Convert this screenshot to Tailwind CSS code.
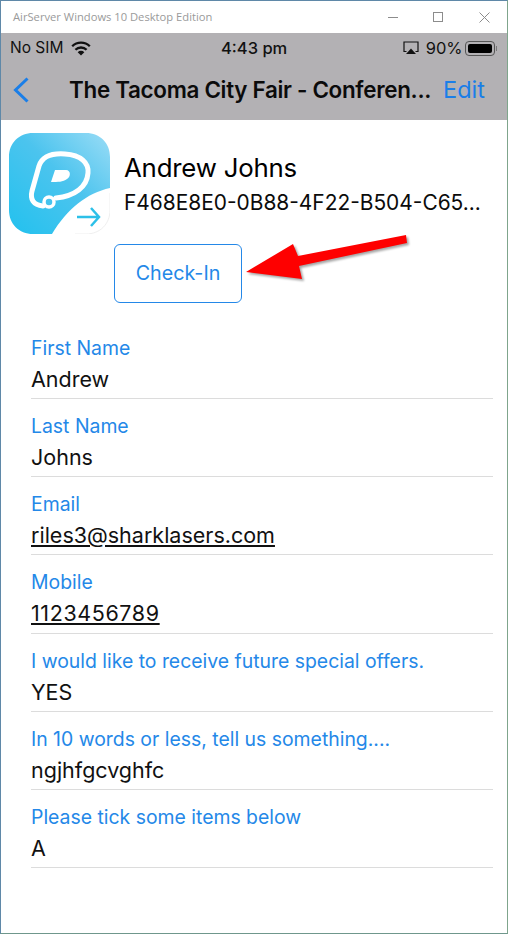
<!DOCTYPE html>
<html lang="en">
<head>
<meta charset="UTF-8">
<title>AirServer Windows 10 Desktop Edition</title>
<script src="https://cdn.jsdelivr.net/npm/@tailwindcss/browser@4"></script>
</head>
<body class="bg-white">
<div class="w-[508px] h-[934px] flex flex-col overflow-hidden border-l border-t border-b border-r border-l-[#5f88a8] border-t-[#5f88a8] border-r-[#7fa58c] border-b-[#6f978c] font-['Inter','Liberation_Sans',sans-serif] relative">

  <!-- Window title bar -->
  <div class="h-[32px] shrink-0 flex items-center bg-white font-['Open_Sans','Liberation_Sans',sans-serif]">
    <span class="ml-[12px] text-[11.2px] text-[#9a9a9a]">AirServer Windows 10 Desktop Edition</span>
    <div class="ml-auto flex items-center gap-[35px] mr-[17px]">
      <div class="w-[10px] h-px bg-[#8c8c8c]"></div>
      <div class="w-[10px] h-[10px] border border-[#8c8c8c]"></div>
      <svg class="ml-px" width="11" height="11" viewBox="0 0 11 11" stroke="#8c8c8c" stroke-width="1" fill="none"><path d="M0.5 0.5L10.5 10.5M10.5 0.5L0.5 10.5"/></svg>
    </div>
  </div>

  <!-- Status and nav -->
  <div class="h-[87px] shrink-0 bg-[#b3b1b4] flex flex-col">
    <div class="h-[30px] relative flex items-center px-[9px] text-[15.5px] text-[#111]">
      <span>No SIM</span>
      <svg class="ml-[8px]" width="20" height="15" viewBox="0 0 20 15" fill="none" stroke="#111" stroke-width="2.300"><path d="M1.200 5.200A12.500 12.500 0 0 1 18.800 5.200"/><path d="M4.400 8.800A8 8 0 0 1 15.600 8.800"/><path d="M10 14.600L6.700 11.200A4.700 4.700 0 0 1 13.300 11.200Z" fill="#111" stroke="none"/></svg>
      <span class="absolute left-[220px] text-[16.5px] font-medium">4:43 pm</span>
      <div class="ml-auto flex items-center">
        <svg width="16" height="14" viewBox="0 0 16 14" fill="none"><path d="M3.500 10.500H1V1h14v9.500h-2.500" stroke="#111" stroke-width="1.200"/><path d="M8 7.500L13 13H3z" fill="#111"/></svg>
        <span class="ml-[7px] text-[16.5px]">90%</span>
        <div class="ml-[2px] w-[30px] h-[15px] rounded-[4px] border border-[#555] p-[2px]"><div class="w-[24px] h-full rounded-[2px] bg-black"></div></div>
        <div class="w-[1.500px] h-[5px] ml-px mr-[1px] bg-[#777]"></div>
      </div>
    </div>
    <div class="h-[57px] flex items-center">
      <svg class="ml-[11px] mb-[3px]" width="19" height="28" viewBox="0 0 19 28" fill="none" stroke="#1a7ee8" stroke-width="3"><path d="M15.500 2.500L3.500 14l12 11.500"/></svg>
      <span class="ml-[38px] mb-[3px] text-[22.4px] font-semibold tracking-[-0.3px] text-[#0b0b0b] whitespace-nowrap">The Tacoma City Fair - Conferen...</span>
      <span class="ml-auto mr-[22px] mb-[3px] text-[23.5px] text-[#1a7ee8]">Edit</span>
    </div>
  </div>

  <!-- Header -->
  <div class="flex pl-[8px] pt-[13px] shrink-0">
    <svg class="w-[101px] h-[101px] shrink-0" viewBox="0 0 101 101">
      <defs>
        <linearGradient id="tile" x1="0" y1="1" x2="1" y2="0">
          <stop offset="0" stop-color="#22c1ee"/>
          <stop offset="0.55" stop-color="#4cc4ee"/>
          <stop offset="1" stop-color="#9adcf6"/>
        </linearGradient>
      </defs>
      <path d="M24 0H77C91 0 101 10 101 24V55C78 60 58 76 43 101H24C10 101 0 91 0 77V24C0 10 10 0 24 0Z" fill="url(#tile)"/>
      <path d="M101 60V77C101 91 91 101 77 101H66" fill="none" stroke="#efefef" stroke-width="1"/>
      <path d="M34 73C24 72 21 66 23 58L30 33C33 24 42 20 56 21C72 22 80 30 79 40C78 54 66 63 47 65" fill="none" stroke="#fff" stroke-width="5" stroke-linecap="round"/>
      <path d="M46 37H57C62 37 62 44 58 46C54 49 49 49 42 49Z" fill="#fff"/>
      <circle cx="40" cy="69" r="5" fill="#45c3ee" stroke="#fff" stroke-width="3.500"/>
      <path d="M68 84H90M82 75L90 84L82 93" fill="none" stroke="#2cc0e8" stroke-width="2.500"/>
    </svg>
    <div class="ml-[14px] pt-[17px] min-w-0">
      <div class="text-[25.8px] leading-[36px] tracking-[-0.2px] text-black">Andrew Johns</div>
      <div class="mt-[3px] text-[20.9px] leading-[28px] text-[#0b0b0b] whitespace-nowrap">F468E8E0-0B88-4F22-B504-C65...</div>
    </div>
  </div>

  <div class="ml-[113px] mt-[10px] shrink-0 w-[128px] h-[59px] flex items-center justify-center rounded-[6px] border-[1.5px] border-[#2488e8] text-[19.7px] text-[#2488e8]">Check-In</div>

  <!-- Fields -->
  <div class="ml-[30px] mr-[14px] mt-[18px] shrink-0 flex flex-col">
    <div class="h-[78.170px] border-b border-[#dcdcdc] pt-[13px]">
      <div class="text-[19.4px] leading-[28px] text-[#2488e8]">First Name</div>
      <div class="text-[21.5px] leading-[32px] mt-[1px] text-[#111]">Andrew</div>
    </div>
    <div class="h-[78.170px] border-b border-[#dcdcdc] pt-[13px]">
      <div class="text-[19.4px] leading-[28px] text-[#2488e8]">Last Name</div>
      <div class="text-[21.5px] leading-[32px] mt-[1px] text-[#111]">Johns</div>
    </div>
    <div class="h-[78.170px] border-b border-[#dcdcdc] pt-[13px]">
      <div class="text-[19.4px] leading-[28px] text-[#2488e8]">Email</div>
      <div class="text-[21.5px] leading-[32px] mt-[1px] text-[#111] underline">riles3@sharklasers.com</div>
    </div>
    <div class="h-[78.170px] border-b border-[#dcdcdc] pt-[13px]">
      <div class="text-[19.4px] leading-[28px] text-[#2488e8]">Mobile</div>
      <div class="text-[21.5px] leading-[32px] mt-[1px] text-[#111] underline tracking-[0.6px]">1123456789</div>
    </div>
    <div class="h-[78.170px] border-b border-[#dcdcdc] pt-[13px]">
      <div class="text-[19.4px] leading-[28px] text-[#2488e8] whitespace-nowrap">I would like to receive future special offers.</div>
      <div class="text-[21.5px] leading-[32px] mt-[1px] text-[#111]">YES</div>
    </div>
    <div class="h-[78.170px] border-b border-[#dcdcdc] pt-[13px]">
      <div class="text-[19.4px] leading-[28px] text-[#2488e8] whitespace-nowrap">In 10 words or less, tell us something....</div>
      <div class="text-[21.5px] leading-[32px] mt-[1px] text-[#111]">ngjhfgcvghfc</div>
    </div>
    <div class="h-[78.170px] border-b border-[#dcdcdc] pt-[13px]">
      <div class="text-[19.4px] leading-[28px] text-[#2488e8]">Please tick some items below</div>
      <div class="text-[21.5px] leading-[32px] mt-[1px] text-[#111]">A</div>
    </div>
  </div>

  <!-- Red annotation arrow -->
  <svg class="absolute left-[239px] top-[227px] drop-shadow-[2px_2px_1px_rgba(0,0,0,0.35)]" width="175" height="60" viewBox="0 0 175 60">
    <path d="M6 44L53 16L58 28L166 7L167 15L59 38L62 51Z" fill="#fe0000"/>
  </svg>
</div>
</body>
</html>
